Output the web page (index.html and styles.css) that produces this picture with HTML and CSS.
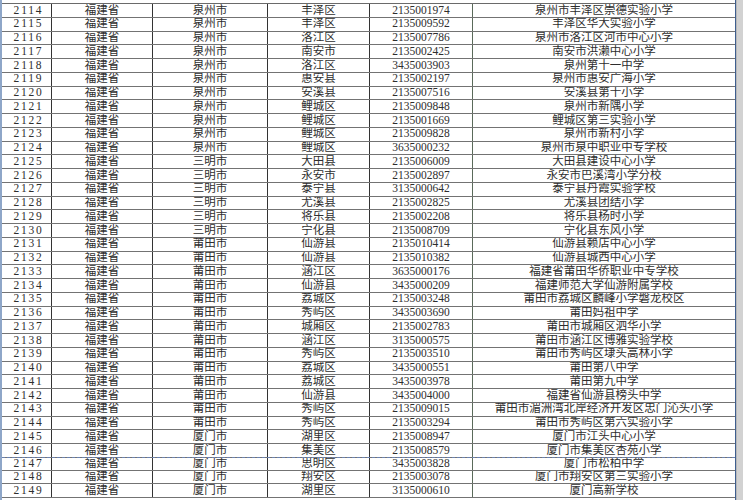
FILE: index.html
```html
<!DOCTYPE html>
<html lang="zh-CN">
<head>
<meta charset="utf-8">
<title>学校名单</title>
<link rel="stylesheet" href="styles.css">
</head>
<body>
<div class="window">
  <div class="sheet">
    <div class="grid" id="grid">
      <div class="row"><span class="c no">2114</span><span class="c">福建省</span><span class="c">泉州市</span><span class="c">丰泽区</span><span class="c code">2135001974</span><span class="c">泉州市丰泽区崇德实验小学</span></div>
      <div class="row"><span class="c no">2115</span><span class="c">福建省</span><span class="c">泉州市</span><span class="c">丰泽区</span><span class="c code">2135009592</span><span class="c">丰泽区华大实验小学</span></div>
      <div class="row"><span class="c no">2116</span><span class="c">福建省</span><span class="c">泉州市</span><span class="c">洛江区</span><span class="c code">2135007786</span><span class="c">泉州市洛江区河市中心小学</span></div>
      <div class="row"><span class="c no">2117</span><span class="c">福建省</span><span class="c">泉州市</span><span class="c">南安市</span><span class="c code">2135002425</span><span class="c">南安市洪濑中心小学</span></div>
      <div class="row"><span class="c no">2118</span><span class="c">福建省</span><span class="c">泉州市</span><span class="c">洛江区</span><span class="c code">3435003903</span><span class="c">泉州第十一中学</span></div>
      <div class="row"><span class="c no">2119</span><span class="c">福建省</span><span class="c">泉州市</span><span class="c">惠安县</span><span class="c code">2135002197</span><span class="c">泉州市惠安广海小学</span></div>
      <div class="row"><span class="c no">2120</span><span class="c">福建省</span><span class="c">泉州市</span><span class="c">安溪县</span><span class="c code">2135007516</span><span class="c">安溪县第十小学</span></div>
      <div class="row"><span class="c no">2121</span><span class="c">福建省</span><span class="c">泉州市</span><span class="c">鲤城区</span><span class="c code">2135009848</span><span class="c">泉州市新隅小学</span></div>
      <div class="row"><span class="c no">2122</span><span class="c">福建省</span><span class="c">泉州市</span><span class="c">鲤城区</span><span class="c code">2135001669</span><span class="c">鲤城区第三实验小学</span></div>
      <div class="row"><span class="c no">2123</span><span class="c">福建省</span><span class="c">泉州市</span><span class="c">鲤城区</span><span class="c code">2135009828</span><span class="c">泉州市新村小学</span></div>
      <div class="row"><span class="c no">2124</span><span class="c">福建省</span><span class="c">泉州市</span><span class="c">鲤城区</span><span class="c code">3635000232</span><span class="c">泉州市泉中职业中专学校</span></div>
      <div class="row"><span class="c no">2125</span><span class="c">福建省</span><span class="c">三明市</span><span class="c">大田县</span><span class="c code">2135006009</span><span class="c">大田县建设中心小学</span></div>
      <div class="row"><span class="c no">2126</span><span class="c">福建省</span><span class="c">三明市</span><span class="c">永安市</span><span class="c code">2135002897</span><span class="c">永安市巴溪湾小学分校</span></div>
      <div class="row"><span class="c no">2127</span><span class="c">福建省</span><span class="c">三明市</span><span class="c">泰宁县</span><span class="c code">3135000642</span><span class="c">泰宁县丹霞实验学校</span></div>
      <div class="row"><span class="c no">2128</span><span class="c">福建省</span><span class="c">三明市</span><span class="c">尤溪县</span><span class="c code">2135002825</span><span class="c">尤溪县团结小学</span></div>
      <div class="row"><span class="c no">2129</span><span class="c">福建省</span><span class="c">三明市</span><span class="c">将乐县</span><span class="c code">2135002208</span><span class="c">将乐县杨时小学</span></div>
      <div class="row"><span class="c no">2130</span><span class="c">福建省</span><span class="c">三明市</span><span class="c">宁化县</span><span class="c code">2135008709</span><span class="c">宁化县东风小学</span></div>
      <div class="row"><span class="c no">2131</span><span class="c">福建省</span><span class="c">莆田市</span><span class="c">仙游县</span><span class="c code">2135010414</span><span class="c">仙游县赖店中心小学</span></div>
      <div class="row"><span class="c no">2132</span><span class="c">福建省</span><span class="c">莆田市</span><span class="c">仙游县</span><span class="c code">2135010382</span><span class="c">仙游县城西中心小学</span></div>
      <div class="row"><span class="c no">2133</span><span class="c">福建省</span><span class="c">莆田市</span><span class="c">涵江区</span><span class="c code">3635000176</span><span class="c">福建省莆田华侨职业中专学校</span></div>
      <div class="row"><span class="c no">2134</span><span class="c">福建省</span><span class="c">莆田市</span><span class="c">仙游县</span><span class="c code">3435000209</span><span class="c">福建师范大学仙游附属学校</span></div>
      <div class="row"><span class="c no">2135</span><span class="c">福建省</span><span class="c">莆田市</span><span class="c">荔城区</span><span class="c code">2135003248</span><span class="c">莆田市荔城区麟峰小学磐龙校区</span></div>
      <div class="row"><span class="c no">2136</span><span class="c">福建省</span><span class="c">莆田市</span><span class="c">秀屿区</span><span class="c code">3435003690</span><span class="c">莆田妈祖中学</span></div>
      <div class="row"><span class="c no">2137</span><span class="c">福建省</span><span class="c">莆田市</span><span class="c">城厢区</span><span class="c code">2135002783</span><span class="c">莆田市城厢区泗华小学</span></div>
      <div class="row"><span class="c no">2138</span><span class="c">福建省</span><span class="c">莆田市</span><span class="c">涵江区</span><span class="c code">3135000575</span><span class="c">莆田市涵江区博雅实验学校</span></div>
      <div class="row"><span class="c no">2139</span><span class="c">福建省</span><span class="c">莆田市</span><span class="c">秀屿区</span><span class="c code">2135003510</span><span class="c">莆田市秀屿区埭头高林小学</span></div>
      <div class="row"><span class="c no">2140</span><span class="c">福建省</span><span class="c">莆田市</span><span class="c">荔城区</span><span class="c code">3435000551</span><span class="c">莆田第八中学</span></div>
      <div class="row"><span class="c no">2141</span><span class="c">福建省</span><span class="c">莆田市</span><span class="c">荔城区</span><span class="c code">3435003978</span><span class="c">莆田第九中学</span></div>
      <div class="row"><span class="c no">2142</span><span class="c">福建省</span><span class="c">莆田市</span><span class="c">仙游县</span><span class="c code">3435004000</span><span class="c">福建省仙游县榜头中学</span></div>
      <div class="row"><span class="c no">2143</span><span class="c">福建省</span><span class="c">莆田市</span><span class="c">秀屿区</span><span class="c code">2135009015</span><span class="c">莆田市湄洲湾北岸经济开发区忠门沁头小学</span></div>
      <div class="row"><span class="c no">2144</span><span class="c">福建省</span><span class="c">莆田市</span><span class="c">秀屿区</span><span class="c code">2135003294</span><span class="c">莆田市秀屿区第六实验小学</span></div>
      <div class="row"><span class="c no">2145</span><span class="c">福建省</span><span class="c">厦门市</span><span class="c">湖里区</span><span class="c code">2135008947</span><span class="c">厦门市江头中心小学</span></div>
      <div class="row"><span class="c no">2146</span><span class="c">福建省</span><span class="c">厦门市</span><span class="c">集美区</span><span class="c code">2135008579</span><span class="c">厦门市集美区杏苑小学</span></div>
      <div class="row pagebreak"><span class="c no">2147</span><span class="c">福建省</span><span class="c">厦门市</span><span class="c">思明区</span><span class="c code">3435003828</span><span class="c">厦门市松柏中学</span></div>
      <div class="row"><span class="c no">2148</span><span class="c">福建省</span><span class="c">厦门市</span><span class="c">翔安区</span><span class="c code">2135003078</span><span class="c">厦门市翔安区第三实验小学</span></div>
      <div class="row"><span class="c no">2149</span><span class="c">福建省</span><span class="c">厦门市</span><span class="c">湖里区</span><span class="c code">3135000610</span><span class="c">厦门高新学校</span></div>
    </div>
  </div>
  <div class="scrollbar"></div>
</div>
</body>
</html>
```

FILE: styles.css
```css
html, body {
  margin: 0;
  padding: 0;
  background: #ffffff;
}

.window {
  display: flex;
  width: 743px;
  height: 500px;
  overflow: hidden;
}

.sheet {
  flex: 0 0 736px;
  border-left: 2px solid #8ea6c8;
  border-right: 1px solid #3f5f8f;
  box-sizing: border-box;
  padding-top: 3px;
  background: #ffffff;
}

.grid {
  display: flex;
  flex-direction: column;
  border-top: 1px solid #6a6a6a;
}

.row {
  display: grid;
  grid-template-columns: 50px 101px 115px 102px 103px 262px;
  height: 13.75px;
  box-sizing: border-box;
  border-bottom: 1px solid #737373;
}

.row.pagebreak {
  border-top: 1px dashed #6b82b0;
  margin-top: -1px;
}

.c {
  display: flex;
  align-items: center;
  justify-content: center;
  border-right: 1px solid #333333;
  font-family: "Liberation Serif", "Noto Sans CJK SC", serif;
  font-size: 11.5px;
  line-height: 1;
  color: #2e2e2e;
  white-space: nowrap;
  overflow: hidden;
}

.c:last-child {
  border-right: none;
}

.no {
  letter-spacing: 1.8px;
  padding-left: 4px;
}

.code {
  border-right-color: #5a6a5a;
}

.scrollbar {
  flex: 1 1 auto;
  background: #d2d2d2;
  border-left: 1px solid #b8b8b8;
}
```
